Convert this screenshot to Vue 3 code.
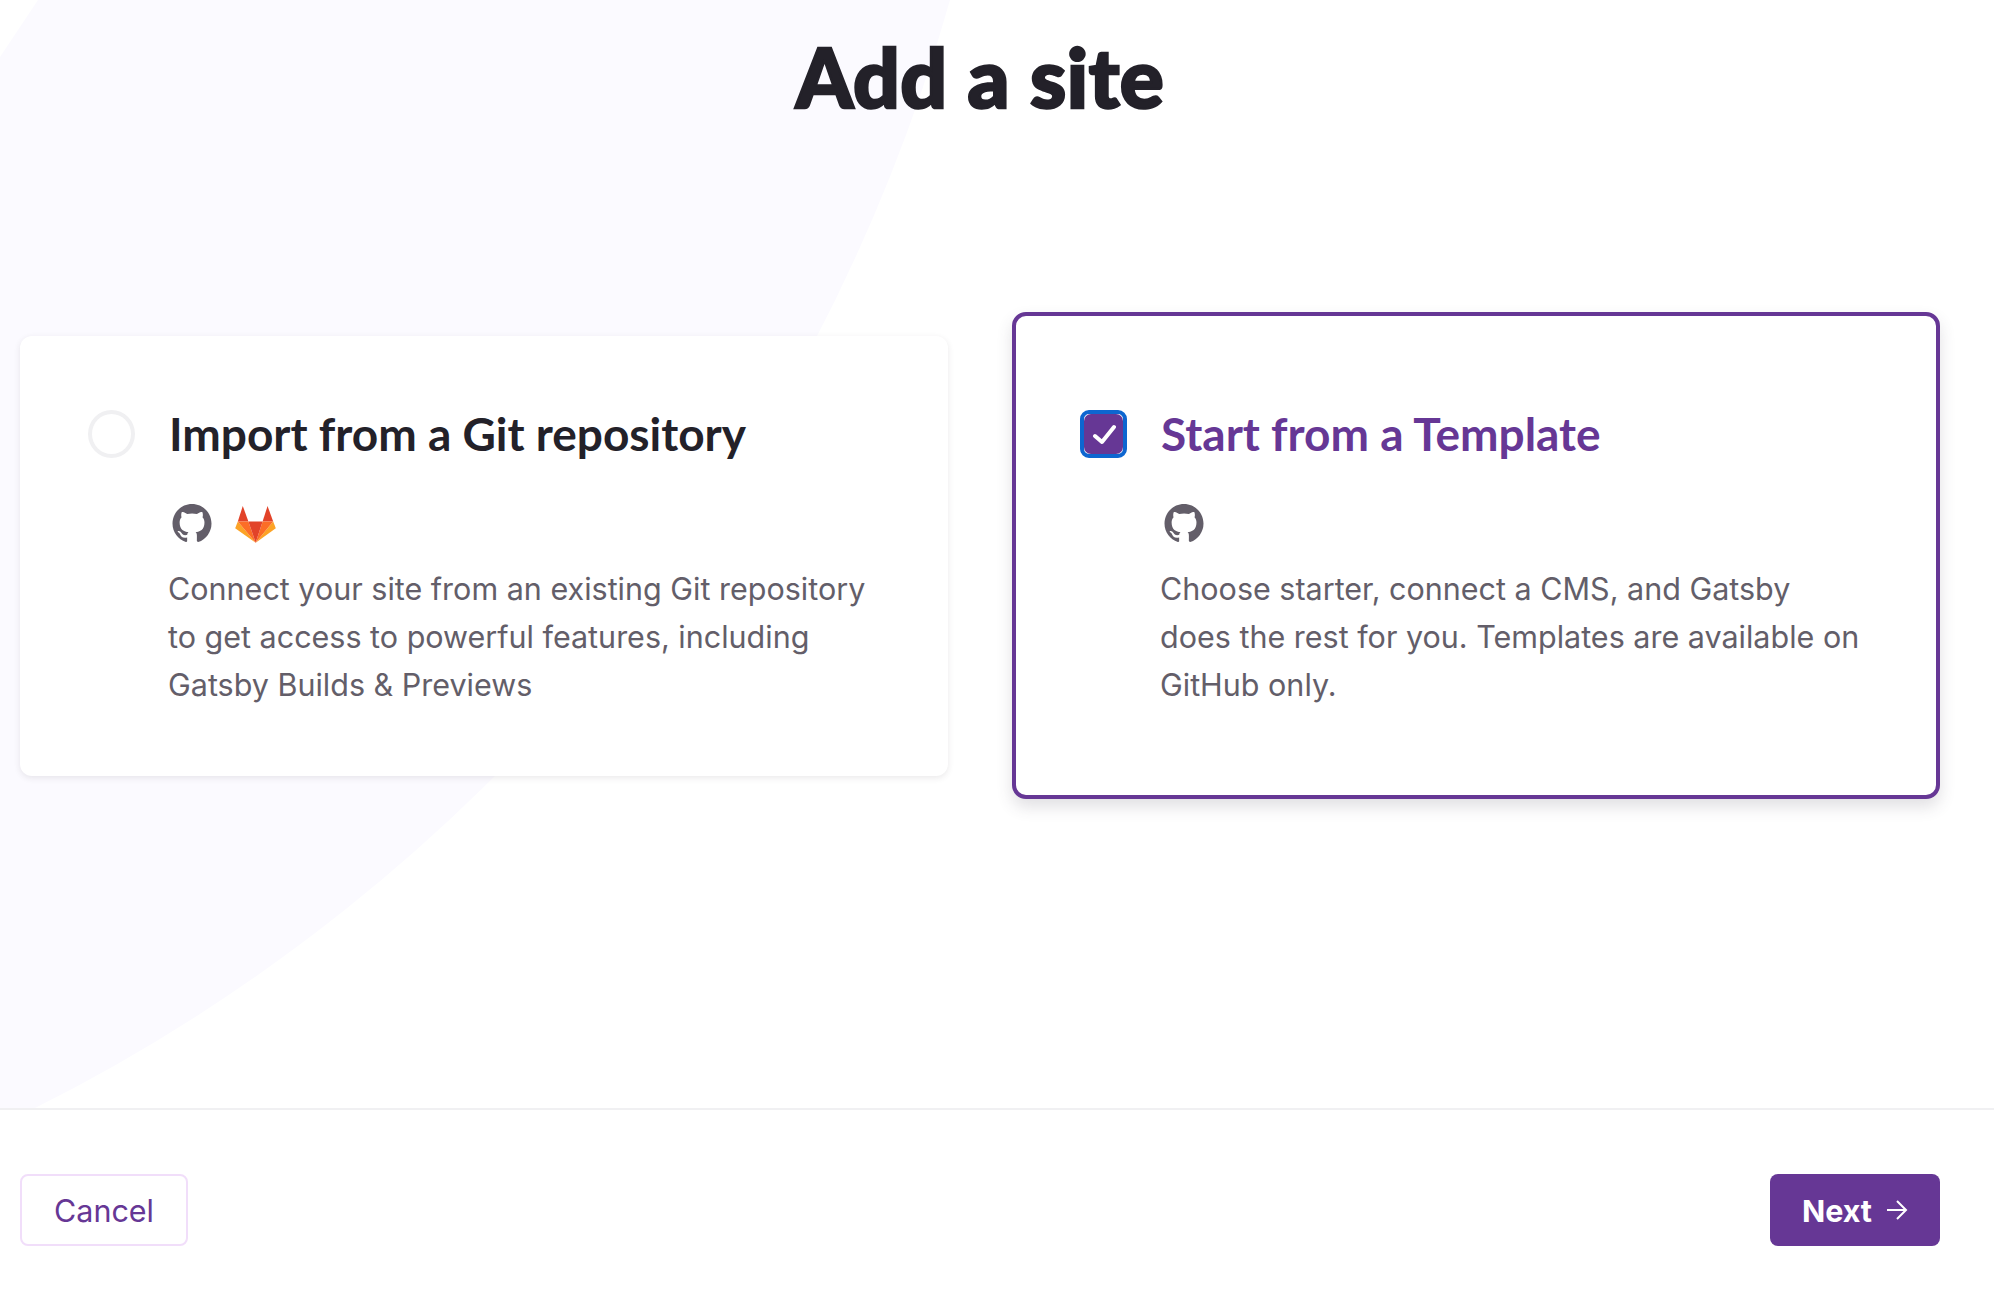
<script setup>
import { ref } from 'vue'

const github = 'M8 0C3.58 0 0 3.58 0 8c0 3.54 2.29 6.53 5.47 7.59.4.07.55-.17.55-.38 0-.19-.01-.82-.01-1.49-2.01.37-2.53-.49-2.69-.94-.09-.23-.48-.94-.82-1.13-.28-.15-.68-.52-.01-.53.63-.01 1.08.58 1.23.82.72 1.21 1.87.87 2.33.66.07-.52.28-.87.51-1.07-1.78-.2-3.64-.89-3.64-3.95 0-.87.31-1.59.82-2.15-.08-.2-.36-1.02.08-2.12 0 0 .67-.21 2.2.82.64-.18 1.32-.27 2-.27.68 0 1.36.09 2 .27 1.53-1.04 2.2-.82 2.2-.82.44 1.1.16 1.92.08 2.12.51.56.82 1.27.82 2.15 0 3.07-1.87 3.75-3.65 3.95.29.25.54.73.54 1.48 0 1.07-.01 1.93-.01 2.2 0 .21.15.46.55.38A8.013 8.013 0 0016 8c0-4.42-3.58-8-8-8z'

const selected = ref('template')
</script>

<template>
  <div class="page">
    <svg class="blob" width="1994" height="1108" viewBox="0 0 1994 1108" aria-hidden="true">
      <path d="M38 0H950A1781 1781 0 0 1 35 1108H0V57Z" fill="#fbfaff" />
    </svg>

    <main class="main">
      <h1 class="title">Add a site</h1>
      <div class="options">
        <section class="card" @click="selected = 'git'">
          <span class="radio" />
          <div class="body">
            <h2>Import from a Git repository</h2>
            <div class="icons">
              <svg class="gh" viewBox="0 0 16 16"><path :d="github" fill="#635e69" /></svg>
              <svg class="gl" viewBox="0 0 123 112">
                <polygon points="23,0 8,47 40,47" fill="#e24329" />
                <polygon points="98,0 83,47 115,47" fill="#e24329" />
                <polygon points="8,47 0,67 62,111" fill="#fca326" />
                <polygon points="115,47 123,67 62,111" fill="#fca326" />
                <polygon points="8,47 40,47 62,111" fill="#fc6d26" />
                <polygon points="83,47 115,47 62,111" fill="#fc6d26" />
                <polygon points="40,47 83,47 62,111" fill="#e24329" />
              </svg>
            </div>
            <p>Connect your site from an existing Git repository to get access to powerful features, including Gatsby Builds &amp; Previews</p>
          </div>
        </section>

        <section class="card active" @click="selected = 'template'">
          <span class="check">
            <span class="check-fill">
              <svg width="24" height="21" viewBox="0 0 24 21"><path d="M3 12l7 6L22 3" fill="none" stroke="#fff" stroke-width="4" stroke-linecap="round" stroke-linejoin="round" /></svg>
            </span>
          </span>
          <div class="body">
            <h2>Start from a Template</h2>
            <div class="icons">
              <svg class="gh" viewBox="0 0 16 16"><path :d="github" fill="#635e69" /></svg>
            </div>
            <p>Choose starter, connect a CMS, and Gatsby does the rest for you. Templates are available on GitHub only.</p>
          </div>
        </section>
      </div>
    </main>

    <footer class="footer">
      <button class="btn cancel">Cancel</button>
      <button class="btn next">
        Next
        <svg width="22" height="22" viewBox="0 0 22 22"><path d="M1 11h19M11 2l9 9-9 9" fill="none" stroke="#fff" stroke-width="2" /></svg>
      </button>
    </footer>
  </div>
</template>

<style scoped>
.page {
  position: relative;
  height: 1290px;
  display: flex;
  flex-direction: column;
  background: #fff;
  overflow: hidden;
  font-family: Inter, "Liberation Sans", sans-serif;
}

.blob {
  position: absolute;
  top: 0;
  left: 0;
}

.main {
  position: relative;
  height: 1108px;
  padding: 0 54px 0 20px;
}

.title {
  margin: 0;
  padding-top: 28px;
  text-align: center;
  font-family: Lato, sans-serif;
  font-size: 82px;
  line-height: 96px;
  font-weight: 900;
  letter-spacing: 0.5px;
  -webkit-text-stroke: 2.5px #232129;
  color: #232129;
}

.options {
  display: grid;
  grid-template-columns: 928px 928px;
  gap: 64px;
  align-items: center;
  height: 487px;
  margin-top: 188px;
}

.card {
  display: flex;
  gap: 33px;
  padding: 74px 40px 67px 68px;
  border-radius: 12px;
  background: #fff;
  box-shadow: 0 2px 6px rgba(46, 41, 51, 0.1);
}

.card.active {
  padding: 94px 40px 86px 64px;
  border: 4px solid #663795;
  border-radius: 14px;
  box-shadow: 0 8px 16px rgba(71, 63, 79, 0.16);
}

.radio {
  flex: none;
  box-sizing: border-box;
  width: 47px;
  height: 48px;
  border: 4px solid #f0f0f2;
  border-radius: 50%;
}

.check {
  flex: none;
  box-sizing: border-box;
  width: 47px;
  height: 48px;
  border: 4px solid #0d66d0;
  border-radius: 9px;
  background: #fff;
}

.check-fill {
  display: flex;
  align-items: center;
  justify-content: center;
  height: 100%;
  border-radius: 7px;
  background: #663795;
}

.body {
  flex: 1;
  min-width: 0;
}

h2 {
  margin: 0 0 0 1px;
  font-family: Lato, sans-serif;
  font-size: 46px;
  line-height: 48px;
  font-weight: 700;
  color: #232129;
}

.active h2 {
  color: #663795;
}

.icons {
  display: flex;
  align-items: flex-end;
  gap: 23px;
  height: 39px;
  margin-top: 46px;
  padding-left: 4px;
}

.gh {
  width: 40px;
  height: 39px;
}

.gl {
  width: 41px;
  height: 37px;
}

p {
  max-width: 704px;
  margin: 22px 0 0;
  font-size: 30.5px;
  line-height: 48px;
  color: #635e69;
}

.footer {
  position: relative;
  flex: 1;
  display: flex;
  justify-content: space-between;
  align-items: flex-start;
  padding: 64px 54px 0 20px;
  border-top: 2px solid #f0f0f2;
}

.btn {
  box-sizing: border-box;
  display: flex;
  align-items: center;
  justify-content: center;
  height: 72px;
  border-radius: 8px;
  font-family: inherit;
  font-size: 30.5px;
}

.cancel {
  width: 168px;
  border: 2px solid #f1defa;
  background: #fff;
  color: #663795;
}

.next {
  gap: 14px;
  width: 170px;
  border: 0;
  background: #663795;
  color: #fff;
  font-weight: 700;
}
</style>
